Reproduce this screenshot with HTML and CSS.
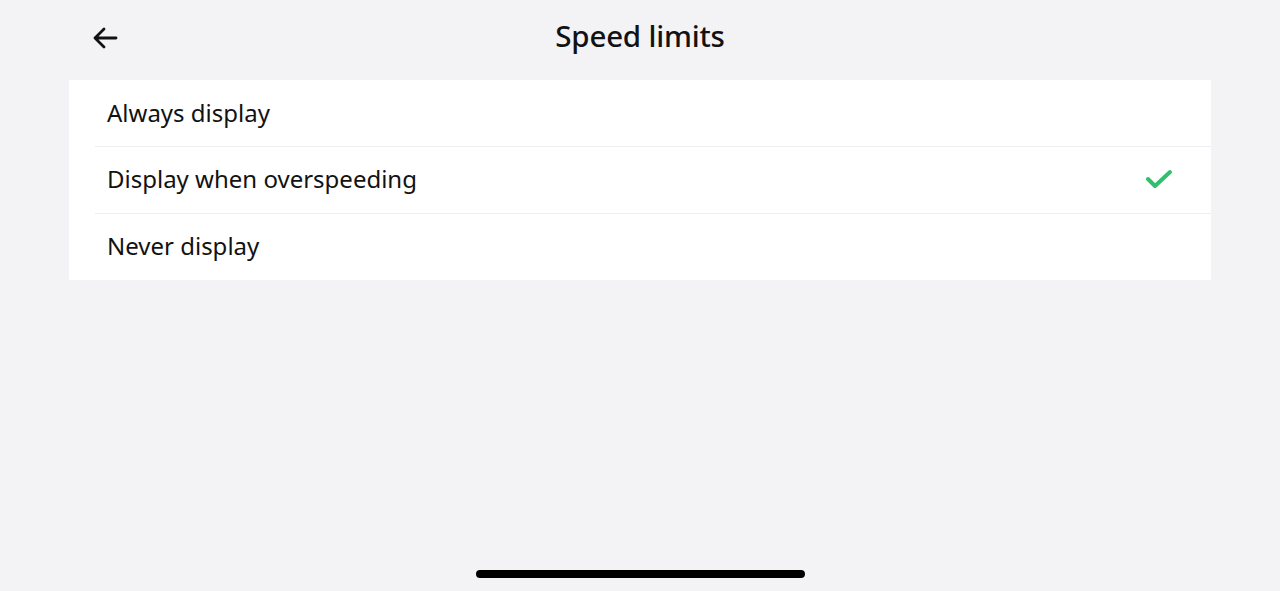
FILE: index.html
```html
<!DOCTYPE html>
<html>
<head>
<meta charset="utf-8">
<link rel="stylesheet" href="styles.css">
</head>
<body>
<div class="screen">
  <header class="topbar">
    <button class="back" aria-label="Back">
      <svg width="26" height="22" viewBox="0 0 26 22"><path d="M24 11H3M12 2L3 11l9 9" fill="none" stroke="#111" stroke-width="2.8" stroke-linecap="round" stroke-linejoin="round"/></svg>
    </button>
    <h1 class="title">Speed limits</h1>
  </header>
  <ul class="card">
    <li class="row"><span>Always display</span></li>
    <li class="row"><span>Display when overspeeding</span>
      <svg class="check" width="28" height="20" viewBox="0 0 28 20"><path d="M3 10l7 7L25 3" fill="none" stroke="#2fbf6f" stroke-width="4" stroke-linecap="round" stroke-linejoin="round"/></svg>
    </li>
    <li class="row"><span>Never display</span></li>
  </ul>
  <div class="spacer"></div>
  <div class="homebar"></div>
</div>
</body>
</html>
```
FILE: styles.css
```css
html, body {
  margin: 0;
  padding: 0;
  background: #f3f3f6;
}
body {
  font-family: "Noto Sans", "Open Sans", sans-serif;
  color: #121212;
}
.screen {
  width: 1280px;
  height: 591px;
  display: flex;
  flex-direction: column;
}
.topbar {
  position: relative;
  height: 80px;
  display: flex;
  align-items: center;
  justify-content: center;
}
.back {
  position: absolute;
  left: 92px;
  top: 27px;
  border: 0;
  background: none;
  padding: 0;
  width: 26px;
  height: 22px;
}
.back svg { display: block; }
.title {
  margin: 0 0 10px;
  font-size: 29.5px;
  font-weight: 500;
  letter-spacing: -0.2px;
}
.card {
  list-style: none;
  margin: 0 69px;
  padding: 0;
  background: #fff;
}
.row {
  height: 66px;
  display: flex;
  align-items: center;
  justify-content: space-between;
  padding: 0 38px 2px 38px;
  box-sizing: border-box;
  font-size: 24px;
  position: relative;
}
.row + .row::before {
  content: "";
  position: absolute;
  left: 26px;
  right: 0;
  top: 0;
  height: 1px;
  background: #eeeef1;
}
.row + .row { height: 67px; }
.check { display: block; margin-top: 0; }
.spacer { flex: 1; }
.homebar {
  align-self: center;
  width: 329px;
  height: 8px;
  border-radius: 4px;
  background: #000;
  margin-bottom: 13px;
}
```
